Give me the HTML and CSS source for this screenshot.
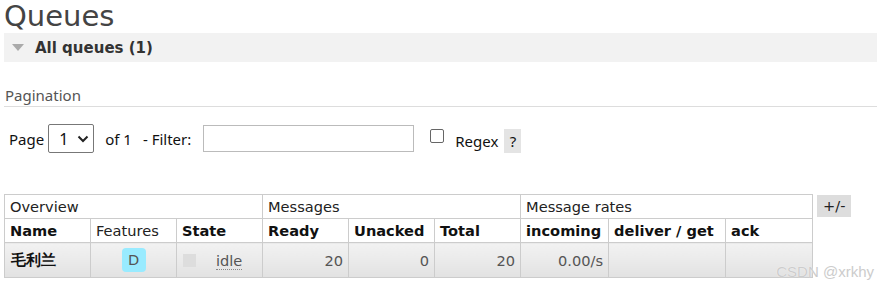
FILE: index.html
```html
<!DOCTYPE html>
<html lang="en">
<head>
    <meta charset="UTF-8">
    <title>Queues</title>
    <link rel="stylesheet" href="styles.css">
</head>
<body>
    <h1>Queues</h1>

    <div class="section-head">
        <span class="arrow"></span>
        <h2>All queues (1)</h2>
    </div>

    <div class="pagination">
        <h3>Pagination</h3>
        <div class="pager">
            <label>Page</label>
            <div class="select">1 <svg width="12" height="8" viewBox="0 0 12 8"><path d="M1.5 1.5 L6 6 L10.5 1.5" fill="none" stroke="#222" stroke-width="2"/></svg></div>
            <label class="of">of 1</label>
            <label class="flt">- Filter:</label>
            <input type="text" class="filter">
            <span class="check"></span>
            <label class="regex">Regex</label>
            <span class="help">?</span>
        </div>
    </div>

    <div class="table-wrap">
        <table class="queues">
            <colgroup>
                <col class="c-name"><col class="c-feat"><col class="c-state">
                <col class="c-ready"><col class="c-unacked"><col class="c-total">
                <col class="c-in"><col class="c-deliver"><col class="c-ack">
            </colgroup>
            <thead>
                <tr class="group">
                    <th colspan="3">Overview</th>
                    <th colspan="3">Messages</th>
                    <th colspan="3">Message rates</th>
                </tr>
                <tr>
                    <th>Name</th>
                    <th class="plain">Features</th>
                    <th>State</th>
                    <th>Ready</th>
                    <th>Unacked</th>
                    <th>Total</th>
                    <th>incoming</th>
                    <th>deliver / get</th>
                    <th>ack</th>
                </tr>
            </thead>
            <tbody>
                <tr>
                    <td class="qname">毛利兰</td>
                    <td class="center"><span class="badge">D</span></td>
                    <td><span class="state-box"></span><abbr>idle</abbr></td>
                    <td class="num">20</td>
                    <td class="num">0</td>
                    <td class="num">20</td>
                    <td class="num">0.00/s</td>
                    <td></td>
                    <td></td>
                </tr>
            </tbody>
        </table>
        <span class="toggle">+/-</span>
    </div>

    <div class="watermark">CSDN @xrkhy</div>
</body>
</html>
```

FILE: styles.css
```css
body {
    margin: 0;
    padding: 0 0 0 4px;
    font-family: "DejaVu Sans", Verdana, sans-serif;
    color: #222;
    background: #fff;
    overflow: hidden;
}

h1 {
    margin: 0;
    font-size: 29px;
    font-weight: normal;
    line-height: 33px;
    color: #444;
}

.section-head {
    display: flex;
    align-items: center;
    height: 29px;
    background: #f2f2f2;
}

.arrow {
    width: 0;
    height: 0;
    margin: 0 11px 0 8px;
    border-left: 6px solid transparent;
    border-right: 6px solid transparent;
    border-top: 7px solid #aaa;
}

.section-head h2 {
    margin: 0;
    font-size: 15px;
    font-weight: bold;
    color: #333;
}

.pagination h3 {
    margin: 24px 0 0;
    padding: 0 0 2px 1px;
    font-family: "Noto Sans", sans-serif;
    font-size: 15px;
    font-weight: normal;
    line-height: 18px;
    color: #555;
    border-bottom: 1px solid #ddd;
}

.pager {
    display: flex;
    align-items: center;
    height: 29px;
    margin-top: 17px;
    padding-left: 5px;
    font-family: "Noto Sans", sans-serif;
    font-size: 15px;
    color: #111;
}

.select {
    display: flex;
    align-items: center;
    gap: 9px;
    box-sizing: border-box;
    width: 46px;
    height: 29px;
    margin: 0 11px 0 4px;
    padding-left: 10px;
    border: 1px solid #777;
    border-radius: 2px;
    font-size: 16px;
}

.pager .of {
    margin-right: 11px;
}

.pager .flt {
    margin-right: 12px;
}

.filter {
    box-sizing: border-box;
    width: 211px;
    height: 27px;
    margin: 0 16px 0 0;
    border: 1px solid #bbb;
}

.check {
    width: 12px;
    height: 12px;
    margin: -5px 11px 0 0;
    border: 1px solid #666;
    border-radius: 2px;
}

.pager .regex {
    margin: 4px 6px 0 0;
}

.help {
    width: 17px;
    height: 24px;
    margin-top: 4px;
    line-height: 24px;
    text-align: center;
    background: #e4e4e4;
}

.table-wrap {
    display: flex;
    align-items: flex-start;
    gap: 4px;
    margin-top: 41px;
}

.queues {
    border-collapse: collapse;
    table-layout: fixed;
    width: 808px;
    font-size: 14.6px;
}

.c-name, .c-feat, .c-state, .c-ready, .c-unacked, .c-total { width: 86px; }
.c-in { width: 88px; }
.c-deliver { width: 117px; }
.c-ack { width: 87px; }

.queues th,
.queues td {
    border: 1px solid #ccc;
    padding: 0 5px;
    text-align: left;
    white-space: nowrap;
    overflow: hidden;
}

.queues th {
    height: 23px;
    font-weight: bold;
    color: #111;
}

.queues .group th,
.queues th.plain {
    font-weight: normal;
    color: #222;
}

.queues tbody td {
    height: 34px;
    background: linear-gradient(#f2f2f2, #e2e2e2);
    color: #555;
}

.queues td.qname {
    font-weight: bold;
    color: #111;
    padding-left: 6px;
}

.center {
    text-align: center !important;
}

.num {
    text-align: right !important;
    padding-right: 5px !important;
}

.badge {
    display: inline-block;
    width: 24px;
    height: 24px;
    line-height: 24px;
    border-radius: 4px;
    background: #99ebff;
    color: #555;
}

.state-box {
    display: inline-block;
    width: 13px;
    height: 13px;
    margin: 0 20px 0 1px;
    vertical-align: -1px;
    background: #ddd;
}

abbr {
    text-decoration: none;
    border-bottom: 1px dotted #888;
}

.toggle {
    padding: 2px 6px;
    height: 18px;
    margin-top: 1px;
    background: #ddd;
    font-size: 14.6px;
    line-height: 18px;
    color: #222;
}

.watermark {
    position: absolute;
    right: 3px;
    top: 263px;
    font-family: "Liberation Sans", sans-serif;
    font-size: 15px;
    color: #cccccc;
    text-shadow: 0 0 1px #fff;
}
```
